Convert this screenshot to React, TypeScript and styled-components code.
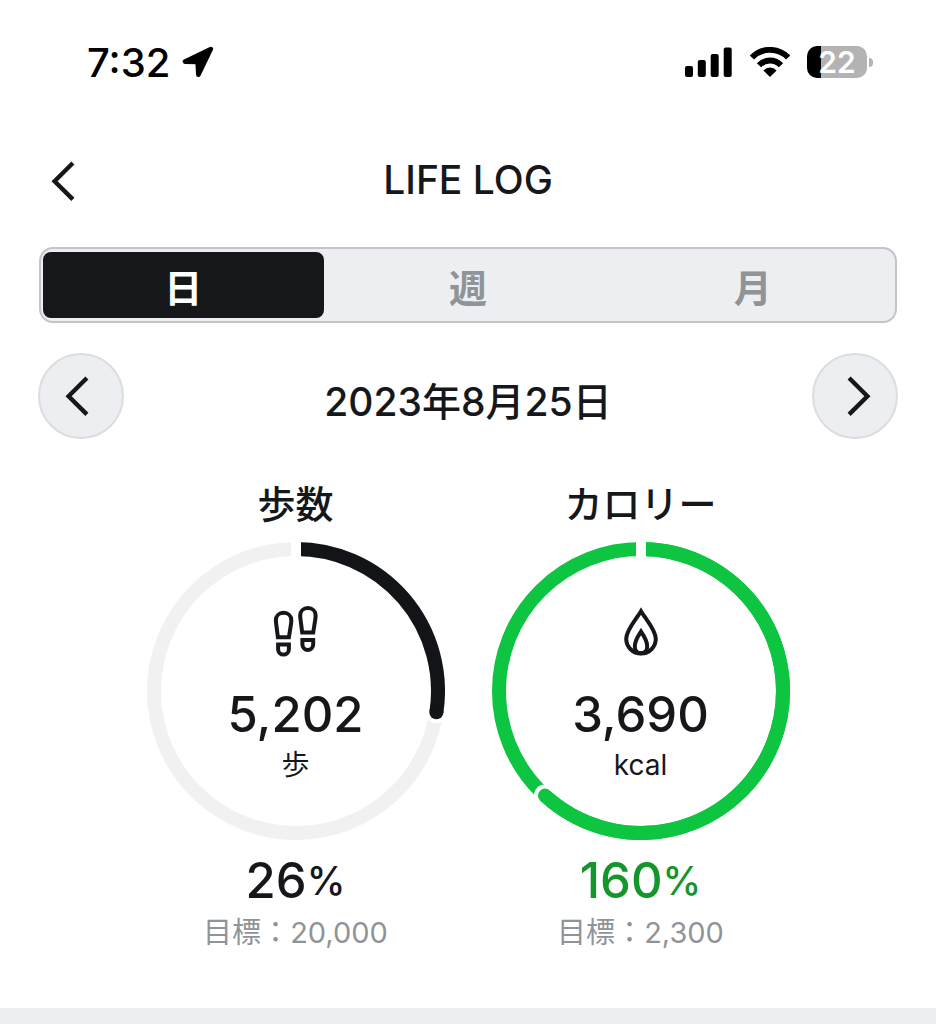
import React, { useState } from "react";
import styled, { createGlobalStyle } from "styled-components";

const ink = "#15171a";
const muted = "#8f9498";
const surface = "#edeef1";

const GlobalStyle = createGlobalStyle`
  * { box-sizing: border-box; }
  body {
    margin: 0;
    background: #fff;
    color: ${ink};
    font-family: Inter, "Noto Sans CJK JP", sans-serif;
  }
  button { font: inherit; color: inherit; padding: 0; border: 0; background: none; cursor: pointer; }
  svg { display: block; flex: none; }
`;

const Screen = styled.main`
  min-height: 100vh;
  display: flex;
  flex-direction: column;
`;

const StatusBar = styled.div`
  height: 124px;
  padding: 0 63px 0 87px;
  display: flex;
  align-items: center;
  justify-content: space-between;
  color: #000;
`;

const StatusGroup = styled.div<{ $gap: number }>`
  display: flex;
  align-items: center;
  gap: ${(p) => p.$gap}px;
`;

const Clock = styled.time`
  padding-top: 2px;
  font-size: 40px;
  line-height: 48px;
  font-weight: 500;
`;

const Battery = styled.div`
  display: flex;
  align-items: center;
  gap: 2px;
`;

const BatteryBody = styled.span<{ $level: number }>`
  width: 60px;
  height: 32px;
  border-radius: 10px;
  display: grid;
  place-items: center;
  color: #fff;
  font-size: 30px;
  line-height: 32px;
  font-weight: 600;
  background: linear-gradient(to right, #000 ${(p) => p.$level}%, #b3b3b3 ${(p) => p.$level}%);
`;

const BatteryTip = styled.span`
  width: 4px;
  height: 9px;
  border-radius: 0 4px 4px 0;
  background: #b3b3b3;
`;

const Header = styled.header`
  height: 114px;
  padding: 0 51px;
  display: grid;
  grid-template-columns: 32px 1fr 32px;
  align-items: center;
`;

const Title = styled.h1`
  margin: 0;
  padding-bottom: 2px;
  text-align: center;
  font-size: 39px;
  line-height: 48px;
  font-weight: 500;
`;

const Tabs = styled.div`
  margin: 9px 39px 0;
  height: 76px;
  display: grid;
  grid-template-columns: repeat(3, 1fr);
  border: 2px solid #c4c5c9;
  border-radius: 14px;
  background: ${surface};
`;

const Tab = styled.button<{ $active: boolean }>`
  && {
    margin: 3px 2px;
    padding-top: 6px;
    border-radius: 8px;
    font-size: 38px;
    line-height: 48px;
    font-weight: 700;
    color: ${(p) => (p.$active ? "#fff" : muted)};
    background: ${(p) => (p.$active ? ink : "transparent")};
  }
`;

const DateRow = styled.div`
  margin: 30px 38px 0;
  display: flex;
  align-items: center;
  justify-content: space-between;
`;

const RoundButton = styled.button`
  && {
    width: 86px;
    height: 86px;
    display: grid;
    place-items: center;
    border: 2px solid #dcdddf;
    border-radius: 50%;
    background: ${surface};
  }
`;

const DateText = styled.h2`
  margin: 0;
  padding-top: 12px;
  font-size: 39px;
  line-height: 48px;
  font-weight: 500;
`;

const Metrics = styled.div`
  padding: 40px 39px 55px;
  display: flex;
  justify-content: center;
  gap: 47px;
`;

const MetricCard = styled.section`
  display: flex;
  flex-direction: column;
  align-items: center;
`;

const MetricTitle = styled.h3`
  margin: 0 0 13px;
  font-size: 38px;
  line-height: 50px;
  font-weight: 500;
`;

const Gauge = styled.div`
  display: grid;
  > * { grid-area: 1 / 1; }
`;

const GaugeBody = styled.div`
  padding-top: 64px;
  display: flex;
  flex-direction: column;
  align-items: center;
`;

const Value = styled.strong`
  margin-top: 27px;
  font-size: 49px;
  line-height: 60px;
  font-weight: 500;
`;

const Unit = styled.span`
  font-size: 28px;
  line-height: 40px;
  font-weight: 400;
`;

const Percent = styled.p<{ $reached: boolean }>`
  margin: 11px 0 2px;
  display: flex;
  align-items: center;
  font-size: 49px;
  line-height: 60px;
  font-weight: 500;
  color: ${(p) => (p.$reached ? "#14962b" : ink)};
`;

const PercentSign = styled.span`
  font-size: 39px;
`;

const Goal = styled.p`
  margin: 0;
  font-size: 29px;
  line-height: 40px;
  font-weight: 400;
  color: ${muted};
`;

const Band = styled.div`
  flex: 1;
  min-height: 16px;
  background: ${surface};
`;

const Chevron = ({ dir }: { dir: "left" | "right" }) => (
  <svg width="32" height="40" viewBox="0 0 32 40" fill="none" stroke={ink} strokeWidth="4.4" aria-hidden="true">
    <path d={dir === "left" ? "M21.9 2L3.6 20.2L21.9 38.4" : "M10.1 2L28.4 20.2L10.1 38.4"} />
  </svg>
);

const LocationArrow = () => (
  <svg width="32" height="32" viewBox="0 0 32 32" stroke="currentColor" strokeWidth="4.6" strokeLinejoin="round" fill="currentColor" aria-hidden="true">
    <path d="M28.8 3L3 15.6L15.6 16L16.4 28.8Z" />
  </svg>
);

const Signal = () => (
  <svg width="48" height="30" viewBox="0 0 48 30" fill="currentColor" aria-hidden="true">
    <rect x="0" y="19" width="8" height="11" rx="2" />
    <rect x="12.8" y="13" width="8" height="17" rx="2" />
    <rect x="25.7" y="7" width="8" height="23" rx="2" />
    <rect x="38.7" y="0.5" width="8" height="29.5" rx="2" />
  </svg>
);

const Wifi = () => (
  <svg width="40" height="30" viewBox="0 0 40 30" fill="none" stroke="currentColor" strokeWidth="5.8" aria-hidden="true">
    <path d="M1.9 10.5A25.2 25.2 0 0 1 38.1 10.5" />
    <path d="M9 18.3A15 15 0 0 1 31 18.3" />
    <path d="M20 30L13.4 23.4Q16.2 20.6 20 20.6T26.6 23.4Z" fill="currentColor" stroke="none" />
  </svg>
);

const Foot = ({ x, y }: { x: number; y: number }) => (
  <g transform={`translate(${x} ${y})`}>
    <path d="M4.5 31.2L2.8 18C2.6 16.6 2.5 15.4 2.5 14.2C2.5 9.8 5.8 6.8 10.2 6.8S17.9 9.8 17.9 14.2C17.9 15.4 17.8 16.6 17.6 18L15.5 31.2Z" />
    <path d="M4.7 38.6H15.5V43.2A5.4 5.4 0 0 1 4.7 43.2Z" />
  </g>
);

const StepsIcon = () => (
  <svg width="46" height="52" viewBox="0 0 46 52" fill="none" stroke={ink} strokeWidth="4" aria-hidden="true">
    <Foot x={0.4} y={0} />
    <Foot x={24.7} y={-4.7} />
  </svg>
);

const FlameIcon = () => (
  <svg width="36" height="52" viewBox="0 0 36 52" fill="none" stroke={ink} strokeWidth="4" strokeMiterlimit="8" aria-hidden="true">
    <path d="M18 5.2C13.5 12.8 3.2 24 3.2 32.8A14.8 14.8 0 0 0 32.8 32.8C32.8 24 22.5 12.8 18 5.2Z" />
    <path d="M18 25.5C15.5 29.5 11.8 34 11.8 40.5C11.8 44.5 14.5 47.2 18 47.2S24.2 44.5 24.2 40.5C24.2 34 20.5 29.5 18 25.5Z" />
  </svg>
);

const SIZE = 298;
const MID = SIZE / 2;
const STROKE = 14;
const RADIUS = MID - STROKE / 2;

function Ring({ ratio }: { ratio: number }) {
  const over = ratio >= 1;
  const color = over ? "#0dc540" : "#121418";
  const degrees = (over ? ratio - 1 : ratio) * 360 + 5;
  const angle = (degrees * Math.PI) / 180;
  const endX = MID + RADIUS * Math.sin(angle);
  const endY = MID - RADIUS * Math.cos(angle);
  return (
    <svg width={SIZE} height={SIZE} viewBox={`0 0 ${SIZE} ${SIZE}`} fill="none" aria-hidden="true">
      <circle cx={MID} cy={MID} r={RADIUS} stroke={over ? color : "#f1f1f1"} strokeWidth={STROKE} />
      <circle cx={endX} cy={endY} r={STROKE / 2 + 4} fill="#fff" />
      <path
        d={`M${MID} ${MID - RADIUS}A${RADIUS} ${RADIUS} 0 ${degrees > 180 ? 1 : 0} 1 ${endX} ${endY}`}
        stroke={color}
        strokeWidth={STROKE}
      />
      <circle cx={endX} cy={endY} r={STROKE / 2} fill={color} />
      <rect x={MID - 5} y="0" width="10" height={STROKE + 2} fill="#fff" />
    </svg>
  );
}

interface Metric {
  title: string;
  value: number;
  goal: number;
  unit: string;
  icon: React.ReactNode;
}

const metrics: Metric[] = [
  { title: "歩数", value: 5202, goal: 20000, unit: "歩", icon: <StepsIcon /> },
  { title: "カロリー", value: 3690, goal: 2300, unit: "kcal", icon: <FlameIcon /> },
];

const periods = ["日", "週", "月"];

export default function App() {
  const [period, setPeriod] = useState("日");
  return (
    <Screen lang="ja">
      <GlobalStyle />
      <StatusBar>
        <StatusGroup $gap={12}>
          <Clock>7:32</Clock>
          <LocationArrow />
        </StatusGroup>
        <StatusGroup $gap={17}>
          <Signal />
          <Wifi />
          <Battery>
            <BatteryBody $level={23}>22</BatteryBody>
            <BatteryTip />
          </Battery>
        </StatusGroup>
      </StatusBar>
      <Header>
        <button type="button" aria-label="戻る">
          <Chevron dir="left" />
        </button>
        <Title>LIFE LOG</Title>
      </Header>
      <Tabs role="tablist">
        {periods.map((p) => (
          <Tab key={p} type="button" role="tab" aria-selected={p === period} $active={p === period} onClick={() => setPeriod(p)}>
            {p}
          </Tab>
        ))}
      </Tabs>
      <DateRow>
        <RoundButton type="button" aria-label="前の日">
          <Chevron dir="left" />
        </RoundButton>
        <DateText>2023年8月25日</DateText>
        <RoundButton type="button" aria-label="次の日">
          <Chevron dir="right" />
        </RoundButton>
      </DateRow>
      <Metrics>
        {metrics.map((m) => (
          <MetricCard key={m.title}>
            <MetricTitle>{m.title}</MetricTitle>
            <Gauge>
              <Ring ratio={m.value / m.goal} />
              <GaugeBody>
                {m.icon}
                <Value>{m.value.toLocaleString("en-US")}</Value>
                <Unit>{m.unit}</Unit>
              </GaugeBody>
            </Gauge>
            <Percent $reached={m.value >= m.goal}>
              {Math.floor((m.value / m.goal) * 100)}
              <PercentSign>%</PercentSign>
            </Percent>
            <Goal>目標：{m.goal.toLocaleString("en-US")}</Goal>
          </MetricCard>
        ))}
      </Metrics>
      <Band />
    </Screen>
  );
}
